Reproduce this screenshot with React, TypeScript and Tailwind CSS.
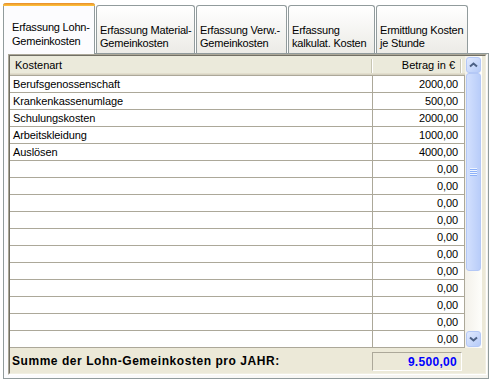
const tabs = [
  { lines: ['Erfassung Lohn-', 'Gemeinkosten'], width: 'w-[92px]', active: true },
  { lines: ['Erfassung Material-', 'Gemeinkosten'], width: 'w-[99px]', active: false },
  { lines: ['Erfassung Verw.-', 'Gemeinkosten'], width: 'w-[91px]', active: false },
  { lines: ['Erfassung', 'kalkulat. Kosten'], width: 'w-[87px]', active: false },
  { lines: ['Ermittlung Kosten', 'je Stunde'], width: 'w-[92px]', active: false },
]

const rows: [string, string][] = [
  ['Berufsgenossenschaft', '2000,00'],
  ['Krankenkassenumlage', '500,00'],
  ['Schulungskosten', '2000,00'],
  ['Arbeitskleidung', '1000,00'],
  ['Auslösen', '4000,00'],
  ...Array.from({ length: 11 }, (): [string, string] => ['', '0,00']),
]

function Tab({ lines, width, active }: { lines: string[]; width: string; active: boolean }) {
  if (active) {
    return (
      <div className={`relative z-10 -mb-px h-[51px] ${width} rounded-t-[3px] border-x border-[#919b9c] bg-[#fcfcfe]`}>
        <div className="-mx-px h-[3px] rounded-t-[3px] bg-gradient-to-b from-[#e68b2c] to-[#ffc73c]" />
        <div className="pl-[8px] pt-[14px] leading-[14px] tracking-[-0.2px] whitespace-nowrap">
          {lines.map((l) => (
            <div key={l}>{l}</div>
          ))}
        </div>
      </div>
    )
  }
  return (
    <div className={`h-[48px] ${width} rounded-t-[3px] border-x border-t border-[#919b9c] bg-gradient-to-b from-white to-[#ecebe6]`}>
      <div className="pl-[3px] pt-[18px] leading-[13px] tracking-[-0.2px] whitespace-nowrap">
        {lines.map((l) => (
          <div key={l}>{l}</div>
        ))}
      </div>
    </div>
  )
}

function HeaderSep() {
  return <div className="h-[14px] w-[2px] shrink-0 border-l border-r border-l-[#c7c5b2] border-r-white" />
}

function Chevron({ down }: { down?: boolean }) {
  return (
    <svg width="9" height="6" viewBox="0 0 9 6">
      <path
        d={down ? 'M1 1.5 L4.5 4.5 L8 1.5' : 'M1 4.5 L4.5 1.5 L8 4.5'}
        fill="none"
        stroke="#4d6185"
        strokeWidth="2"
      />
    </svg>
  )
}

function ScrollButton({ down }: { down?: boolean }) {
  return (
    <div className="flex h-[16px] shrink-0 items-center justify-center rounded-[3px] border border-[#b4c8f6] bg-gradient-to-br from-[#e1eafe] to-[#b6cbf8]">
      <Chevron down={down} />
    </div>
  )
}

function Scrollbar() {
  return (
    <div className="flex w-[17px] flex-col bg-gradient-to-r from-[#f3f1ea] to-[#fefefb] p-px">
      <ScrollButton />
      <div className="flex h-[198px] shrink-0 flex-col items-center justify-center rounded-[3px] border border-[#b4c8f6] bg-gradient-to-r from-[#d3e0fd] to-[#b9cdf9]">
        {[0, 1, 2, 3].map((i) => (
          <div key={i} className="h-[2px] w-[7px] border-t border-b border-t-[#eef4fe] border-b-[#8cb0f8]" />
        ))}
      </div>
      <div className="flex-1" />
      <ScrollButton down />
    </div>
  )
}

export default function App() {
  return (
    <div className="h-[382px] w-[490px] overflow-hidden bg-white font-['Liberation_Sans',Arial,sans-serif] text-[11px] text-black">
      <div className="flex h-[53px] items-end gap-px pl-[3px]">
        {tabs.map((t) => (
          <Tab key={t.lines.join()} {...t} />
        ))}
      </div>

      <div className="ml-[3px] flex h-[326px] w-[486px] flex-col border border-[#919b9c] bg-gradient-to-r from-[#fcfcfe] to-[#f4f3ee] pb-[3px] pl-[4px] pr-[1px]">
        <div className="flex flex-1 flex-col border border-t-[#aca899] border-l-[#aca899] border-b-white border-r-white">
          <div className="flex flex-1 flex-col border border-t-[#716f64] border-l-[#716f64] border-b-[#f1efe2] border-r-[#f1efe2] bg-[#ece9d8]">
            <div className="flex h-[292px]">
              <div className="flex w-[455px] flex-col">
                <div className="flex h-[20px] border-b border-[#aca899] bg-[#ebeadb] shadow-[inset_0_-1px_0_#d6d2c2,inset_0_-2px_0_#e2decd]">
                  <div className="flex w-[363px] items-center justify-between pl-[5px]">
                    <span>Kostenart</span>
                    <HeaderSep />
                  </div>
                  <div className="flex w-[92px] items-center justify-end">
                    <span>Betrag in €</span>
                    <div className="ml-[5px] mr-[3px]">
                      <HeaderSep />
                    </div>
                  </div>
                </div>

                {rows.map(([name, amount], i) => (
                  <div key={i} className="flex h-[17px] border-b border-[#aca899] bg-white leading-[16px] tracking-[-0.1px]">
                    <div className="w-[363px] border-r border-[#aca899] pl-[3px]">{name}</div>
                    <div className="w-[92px] border-r border-[#aca899] pr-[6px] text-right">{amount}</div>
                  </div>
                ))}
              </div>
              <Scrollbar />
            </div>

            <div className="flex h-[25px] items-center justify-between pl-[2px] pr-[23px] font-bold text-[12px]">
              <span className="tracking-[0.55px]">Summe der Lohn-Gemeinkosten pro JAHR:</span>
              <div className="mt-[2px] flex h-[19px] w-[90px] items-center justify-end border border-t-[#aca899] border-l-[#aca899] border-b-white border-r-white pr-[4px] tracking-[0.3px] text-[#0000ff]">
                9.500,00
              </div>
            </div>
          </div>
        </div>
      </div>
    </div>
  )
}
